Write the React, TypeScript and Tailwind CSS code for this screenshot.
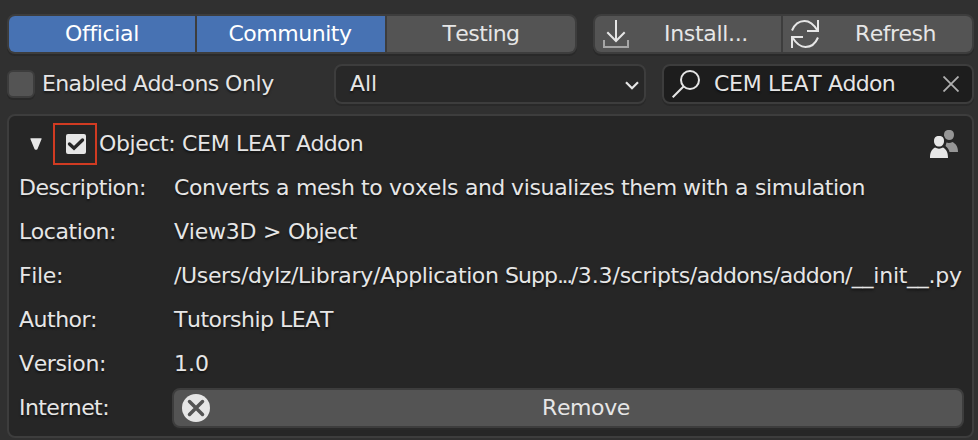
import React from "react";

// Glyph advances of DejaVu Sans in font units (2048 per em).
const ADVANCES: Record<string, number> = {
  A: 1401, C: 1430, D: 1577, E: 1294, F: 1178, I: 604, L: 1141, M: 1767, O: 1612, R: 1423, S: 1300, T: 1251, U: 1499, V: 1401,
  a: 1255, b: 1300, c: 1126, d: 1300, e: 1260, f: 721, g: 1300, h: 1298, i: 569, j: 569, l: 569, m: 1995, n: 1298, o: 1253,
  p: 1300, r: 842, s: 1067, t: 803, u: 1298, v: 1212, w: 1675, x: 1212, y: 1212, z: 1075,
  " ": 651, ".": 651, ":": 690, "/": 690, _: 1024, "-": 739, ">": 1716, "0": 1303, "1": 1303, "3": 1303,
};

// Spaces a run so that its width is the sum of whole-pixel glyph advances.
function spacing(run: string) {
  let diff = 0;
  for (const ch of run) {
    const px = ((ADVANCES[ch] ?? 0) * 22) / 2048;
    diff += Math.floor(px * 1.001) - px;
  }
  return diff / run.length;
}

function Label({ text, className = "" }: { text: string; className?: string }) {
  const runs = text.match(/[^ /]*[ /]|[^ /]+/g) ?? [];
  return (
    <span className={className}>
      {runs.map((run, i) => {
        if (run.endsWith(".../")) {
          const word = run.slice(0, -4);
          return (
            <React.Fragment key={i}>
              <span style={{ letterSpacing: `${spacing(word)}px` }}>{word}</span>
              <span className="tracking-[-2.400px]">...</span>
              <span style={{ letterSpacing: `${spacing("/")}px` }}>/</span>
            </React.Fragment>
          );
        }
        return (
          <span key={i} style={{ letterSpacing: `${spacing(run)}px` }}>
            {run}
          </span>
        );
      })}
    </span>
  );
}

function SegButton({ label, active, width }: { label: string; active?: boolean; width: string }) {
  return (
    <button
      className={`flex h-9 items-center justify-center ${width} ${active ? "bg-[#4772b3] text-white" : "bg-[#545454]"}`}
    >
      <Label text={label} />
    </button>
  );
}

function ImportIcon() {
  return (
    <svg className="h-[28px] w-[26px] shrink-0" viewBox="0 0 26 28" fill="none" strokeWidth="2">
      <path d="M13 0V20M4.3 12.3L13 21L21.7 12.3" stroke="#e6e6e6" />
      <path d="M1 20V27H25V20" stroke="#a6a6a6" />
    </svg>
  );
}

function RefreshIcon() {
  return (
    <svg className="h-[28px] w-[28px] shrink-0" viewBox="0 0 28 28" fill="none" stroke="#e6e6e6" strokeWidth="2">
      <path d="M1 10.5C3.5 4.5 8 1 13.5 1C19 1 22.5 4 26.5 10.5M27 0V11H16" />
      <path d="M27 17.5C24.5 23.5 20 27 14.5 27C9 27 5.5 24 1.5 17.5M1 28V17H12" />
    </svg>
  );
}

function SearchIcon() {
  return (
    <svg className="h-7 w-7 shrink-0" viewBox="0 0 28 28" fill="none" stroke="#e6e6e6" strokeWidth="2">
      <circle cx="18" cy="10" r="9" />
      <path d="M11.5 16.5L.7 27.3" />
    </svg>
  );
}

function CommunityIcon() {
  return (
    <svg className="h-7 w-7 shrink-0" viewBox="0 0 28 28">
      <path d="M19 0C22.500 0 24 1.500 24 5C24 8 22.200 10 19 10C17.500 10 16.300 9.500 15.500 8.600C14.800 7.300 14.400 6.600 14 5.800C14 1.500 15.500 0 19 0Z" fill="#969696" />
      <path d="M22.500 12C26 14 28 16.500 28 22H19.500C19 19.500 17.500 17.500 15.500 16L16.500 12.500C18.500 13.300 20.500 13 22.500 12Z" fill="#969696" />
      <path d="M9 6C12.500 6 14 7.500 14 11C14 14.500 12 16.500 9 16.500C6 16.500 4 14.500 4 11C4 7.500 5.500 6 9 6Z" fill="#e6e6e6" />
      <path d="M5 17.500C7.500 19 10.500 19 13 17.500C16.500 19.500 18 22.500 18 28H0C0 22.500 1.500 19.500 5 17.500Z" fill="#e6e6e6" />
    </svg>
  );
}

const details = [
  ["Description:", "Converts a mesh to voxels and visualizes them with a simulation"],
  ["Location:", "View3D > Object"],
  ["File:", "/Users/dylz/Library/Application Supp.../3.3/scripts/addons/addon/__init__.py"],
  ["Author:", "Tutorship LEAT"],
  ["Version:", "1.0"],
];

const shade = "shadow-[0_2px_0_#292929]";

export default function App() {
  return (
    <div className="h-[440px] w-[978px] overflow-hidden whitespace-pre bg-[#303030] pl-[7px] pt-[14px] font-['DejaVu_Sans',sans-serif] text-[22px] leading-[26px] text-[#e6e6e6] [font-kerning:none] [font-variant-ligatures:none] [text-shadow:0_2px_2px_rgba(0,0,0,0.5)]">
      <div className="flex gap-4">
        <div className={`flex h-10 w-[570px] gap-[2px] overflow-hidden rounded-[8px] border-2 border-[#3d3d3d] bg-[#3d3d3d] ${shade}`}>
          <SegButton label="Official" active width="w-[186px]" />
          <SegButton label="Community" active width="w-[188px] pr-[2px]" />
          <SegButton label="Testing" width="w-[188px]" />
        </div>
        <div className={`flex h-10 w-[381px] gap-[2px] overflow-hidden rounded-[8px] border-2 border-[#3d3d3d] bg-[#3d3d3d] ${shade}`}>
          <button className="flex w-[186px] items-center bg-[#545454] pl-2">
            <ImportIcon />
            <Label className="pl-[35px]" text="Install..." />
          </button>
          <button className="flex w-[189px] items-center bg-[#545454] pl-2">
            <RefreshIcon />
            <Label className="pl-[36px]" text="Refresh" />
          </button>
        </div>
      </div>

      <div className="mt-[10px] flex h-10 items-center">
        <div className={`h-7 w-7 rounded-[6px] border-2 border-[#3d3d3d] bg-[#545454] ${shade}`} />
        <Label className="w-[299px] pl-[7px]" text="Enabled Add-ons Only" />
        <div className={`flex h-10 w-[312px] items-center justify-between rounded-[8px] border-2 border-[#3d3d3d] bg-[#282828] pl-[14px] pr-[5px] ${shade}`}>
          <Label text="All" />
          <svg className="mt-[3px] h-[9px] w-[14px]" viewBox="0 0 14 9" fill="none" stroke="#e6e6e6" strokeWidth="2.200">
            <path d="M1 1.200L7 7.200L13 1.200" />
          </svg>
        </div>
        <div className={`ml-4 flex h-10 w-[312px] items-center rounded-[8px] border-2 border-[#3d3d3d] bg-[#1d1d1d] pl-2 ${shade}`}>
          <SearchIcon />
          <Label className="flex-1 pl-[14px]" text="CEM LEAT Addon" />
          <svg className="mr-[13px] h-4 w-4" viewBox="0 0 16 16" fill="none" stroke="#b0b0b0" strokeWidth="1.800">
            <path d="M.5.5L15.500 15.500M15.500.5L.5 15.500" />
          </svg>
        </div>
      </div>

      <div className="mt-[10px] h-[324px] w-[967px] rounded-[8px] border-2 border-[#3d3d3d] bg-[#262626] pl-[10px] pt-[6px]">
        <div className="flex h-11 items-center">
          <svg className="ml-[11px] h-3 w-3" viewBox="0 0 12 12" fill="#e6e6e6">
            <path d="M.9.2H11.100Q11.900.2 11.600 1L7.500 10.900Q7.200 11.700 6.500 11.700H5.500Q4.800 11.700 4.500 10.900L.4 1Q.1.2.9.2Z" />
          </svg>
          <div className="ml-[11px] flex h-[42px] w-[44px] items-center border-2 border-[#d13b22] pl-[11px]">
            <svg className="h-5 w-5" viewBox="0 0 20 20">
              <rect width="20" height="20" rx="2" fill="#e6e6e6" />
              <path d="M3.500 10L8 14.200L16.500 6" fill="none" stroke="#262626" strokeWidth="3.400" strokeLinecap="round" />
            </svg>
          </div>
          <Label className="flex-1 pl-[2px]" text="Object: CEM LEAT Addon" />
          <div className="mr-[14px]"><CommunityIcon /></div>
        </div>
        {details.map(([name, value]) => (
          <div key={name} className="flex h-11 items-center">
            <Label className="w-[155px] shrink-0" text={name} />
            <Label text={value} />
          </div>
        ))}
        <div className="flex h-11 items-center">
          <Label className="w-[153px] shrink-0" text="Internet:" />
          <button className={`flex h-10 w-[792px] items-center rounded-[8px] border-2 border-[#3d3d3d] bg-[#545454] pl-2 ${shade}`}>
            <svg className="h-7 w-7" viewBox="0 0 28 28">
              <circle cx="14" cy="14" r="14" fill="#e6e6e6" />
              <path d="M7.500 7.500L20.500 20.500M20.500 7.500L7.500 20.500" stroke="#545454" strokeWidth="3.500" strokeLinecap="round" />
            </svg>
            <Label className="flex-1 text-center" text="Remove" />
          </button>
        </div>
      </div>
    </div>
  );
}
